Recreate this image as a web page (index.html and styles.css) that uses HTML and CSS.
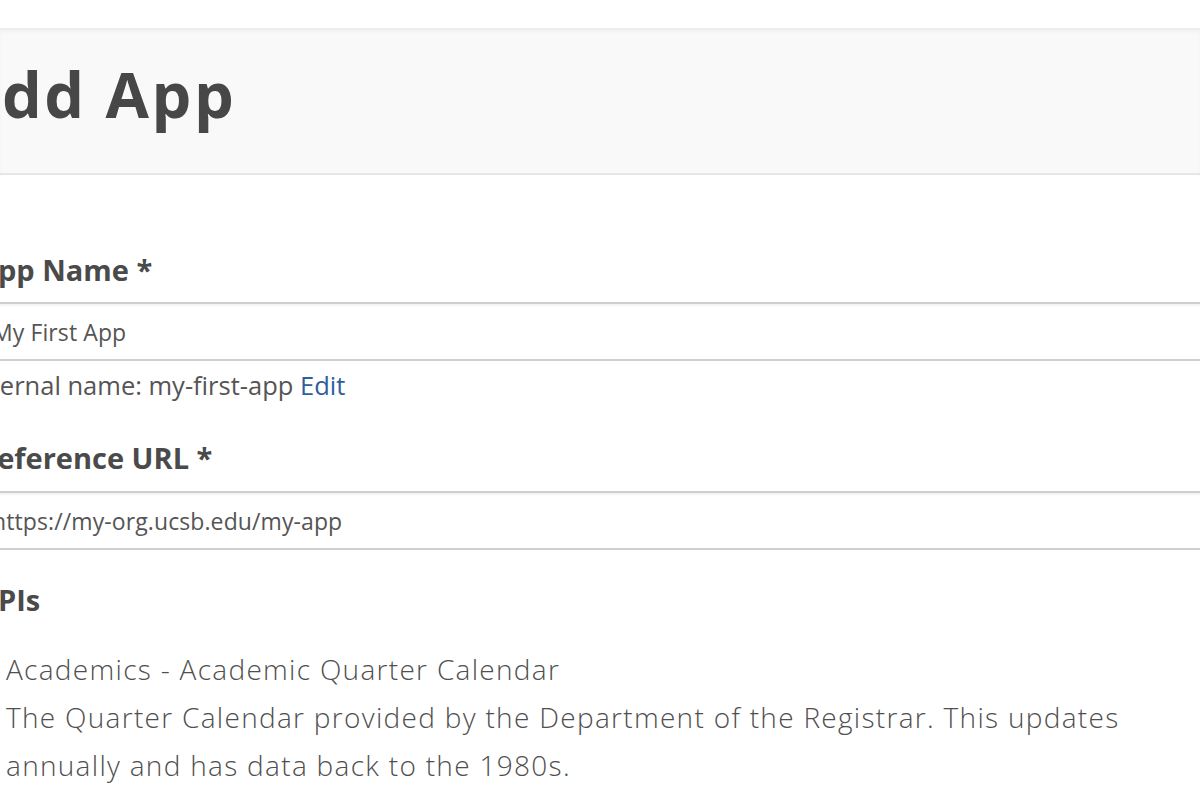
FILE: index.html
```html
<!DOCTYPE html>
<html lang="en">
<head>
<meta charset="utf-8">
<title>Add App</title>
<link rel="stylesheet" href="styles.css">
</head>
<body>
<div class="topbar"></div>
<header class="page-header">
  <h1 class="page-title">Add App</h1>
</header>
<main class="app-form">
  <label class="field-label" for="app-name">App Name *</label>
  <input class="text-input" id="app-name" type="text" value="My First App">
  <p class="help-text">Internal name: my-first-app <a class="edit-link" href="#">Edit</a></p>

  <label class="field-label field-label--spaced" for="ref-url">Reference URL *</label>
  <input class="text-input" id="ref-url" type="text" value="https://my-org.ucsb.edu/my-app">

  <h3 class="field-label section-label">APIs</h3>
  <div class="api-item">
    <span class="api-check"></span>
    <div class="api-text">
      <div class="api-name">Academics - Academic Quarter Calendar</div>
      <div class="api-desc">The Quarter Calendar provided by the Department of the Registrar. This updates annually and has data back to the 1980s.</div>
    </div>
  </div>
</main>
</body>
</html>
```

FILE: styles.css
```css
* { box-sizing: border-box; }

html, body {
  margin: 0;
  padding: 0;
  background: #ffffff;
  overflow: hidden;
}

body {
  font-family: "Open Sans", "Noto Sans", "Liberation Sans", sans-serif;
  color: #4a4a4a;
  width: 1200px;
  height: 800px;
}

.topbar {
  height: 28px;
  background: #ffffff;
}

.page-header {
  background: #f9f9f9;
  border-bottom: 2px solid #e6e6e6;
  box-shadow: inset 0 4px 5px -2px rgba(0, 0, 0, 0.07);
  padding: 29px 0 42px;
}

.page-title {
  margin: 0 0 0 -44px;
  font-size: 63px;
  line-height: 74px;
  font-weight: 700;
  letter-spacing: 2.5px;
  color: #474747;
}

.app-form {
  margin-left: -17px;
  width: 1240px;
  padding-top: 77px;
}

.field-label {
  display: block;
  margin: 0 0 14px -5px;
  font-size: 29px;
  line-height: 36px;
  font-weight: 700;
  color: #4a4a4a;
}

.field-label--spaced {
  margin-top: 39px;
  margin-bottom: 15px;
}

.text-input {
  display: block;
  width: 100%;
  height: 59px;
  margin: 0;
  padding: 0 9px;
  border: 2px solid #cfcfcf;
  border-left: none;
  border-right: none;
  border-radius: 0;
  box-shadow: inset 0 2px 2px rgba(0, 0, 0, 0.05);
  background: #ffffff;
  font-family: "Open Sans", "Noto Sans", "Liberation Sans", sans-serif;
  font-size: 23px;
  letter-spacing: 0.1px;
  color: #555555;
  outline: none;
}

.help-text {
  margin: 8px 0 0 -15px;
  font-size: 25.5px;
  line-height: 32px;
  color: #555555;
}

.edit-link {
  color: #2f5e9a;
  text-decoration: none;
}

.section-label {
  margin-top: 32px;
  margin-bottom: 0;
  margin-left: -5px;
}

.api-item {
  display: flex;
  align-items: flex-start;
  gap: 10px;
  margin-top: 27px;
  margin-left: -11px;
}

.api-check {
  flex: none;
  width: 24px;
  height: 24px;
  margin-top: 12px;
  border: 2px solid #999;
  border-radius: 3px;
}

.api-text {
  width: 1150px;
  font-size: 28px;
  line-height: 48px;
  font-weight: 300;
  letter-spacing: 1.3px;
  color: #4f4f4f;
}
```
